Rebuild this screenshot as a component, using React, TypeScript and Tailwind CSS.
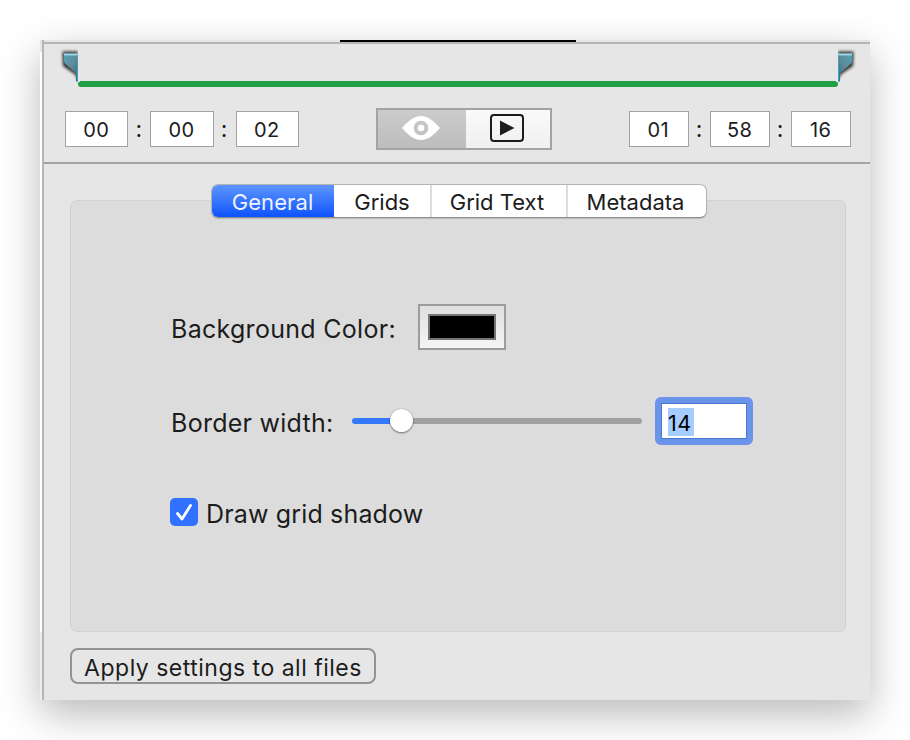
import React from 'react';

const Marker = ({ flip, id }: { flip?: boolean; id: string }) => (
  <svg width="22" height="36" viewBox="0 0 22 36" className={flip ? 'block -scale-x-100' : 'block'}>
    <defs>
      <linearGradient id={id} x1="0" y1="0" x2="1" y2="1">
        <stop offset="0" stopColor="#4aa5bd" />
        <stop offset="0.5" stopColor="#648a98" />
        <stop offset="1" stopColor="#1d6e8c" />
      </linearGradient>
      <filter id={`${id}-blur`} x="-50%" y="-50%" width="200%" height="200%">
        <feGaussianBlur stdDeviation="1.4" />
      </filter>
    </defs>
    <path d="M4.500 5.500H20V32H18V29L5 20Z" fill="#111" opacity="0.85" filter={`url(#${id}-blur)`} />
    <path d="M20 0h2v36h-2z" fill="#e6e6e6" />
    <path d="M6 7.500H20V35.500H18V28L17 26.500L8 18.500Q6 17 6 15Z" fill={`url(#${id})`} />
    <path d="M6 7.500H20V9.500H6Z" fill="#9bd2e2" />
    <path d="M19 9h1v26h-1z" fill="#46a0bb" />
  </svg>
);

const TimeGroup = ({ values, box, gap }: { values: string[]; box: string; gap: string }) => (
  <div className="flex items-center">
    {values.map((v, i) => (
      <React.Fragment key={i}>
        {i > 0 && <span className={`${gap} pr-px text-center text-[23px] leading-none`}>:</span>}
        <div className={`${box} flex h-9 items-center justify-center border border-[#a2a2a2] bg-white pr-px pt-px text-[20px] tracking-[0.4px]`}>
          {v}
        </div>
      </React.Fragment>
    ))}
  </div>
);

const Timeline = () => (
  <section className="h-[120px] border-b-2 border-[#a3a3a3]">
    <div className="flex h-[37px] justify-between pl-[14px] pr-[12px] pt-[2px]">
      <Marker id="start" />
      <Marker id="end" flip />
    </div>
    <div className="ml-[34px] h-[6px] w-[760px] rounded-full bg-[#219f46]" />
    <div className="mt-[21px] flex h-[42px] items-center justify-between pl-[21px] pr-[19px]">
      <TimeGroup values={['00', '00', '02']} box="w-[63.300px]" gap="w-[22px]" />
      <div className="mr-[1px] flex h-[42px] w-[176px] border-2 border-[#a3a3a3]">
        <div className="flex w-[88px] items-center bg-linear-to-b from-[#cccccc] to-[#bdbdbd] pl-6">
          <svg width="38" height="24" viewBox="0 0 38 24" className="mb-[2px]">
            <path fillRule="evenodd" fill="#fff" d="M0 12C6 5 12 0 19 0s13 5 19 12c-6 7-12 12-19 12S6 19 0 12ZM19 4.700a7.300 7.300 0 1 0 0 14.600a7.300 7.300 0 1 0 0-14.600ZM19 8.700a3.300 3.300 0 1 1 0 6.600a3.300 3.300 0 1 1 0-6.600Z" />
          </svg>
        </div>
        <div className="flex grow items-center bg-linear-to-b from-[#fafafa] to-[#f0f0f0] pl-6">
          <svg width="34" height="28" viewBox="0 0 34 28" className="mb-[2px]">
            <rect x="1" y="1" width="32" height="26" rx="3" fill="none" stroke="#1c1c1c" strokeWidth="2" />
            <path d="M10 6.500V21.500L24.500 14Z" fill="#1c1c1c" />
          </svg>
        </div>
      </div>
      <TimeGroup values={['01', '58', '16']} box="w-[59.500px]" gap="w-[21.700px]" />
    </div>
  </section>
);

const Tabs = () => (
  <div className="relative ml-[141px] flex h-[34px] w-[496px] overflow-hidden rounded-[7px] border border-[#b3b3b3] border-b-[#8f8f8f] bg-white text-[22px] shadow-[0_1px_1px_rgba(0,0,0,0.15)]">
    <div className="-my-px -ml-px flex w-[123px] shrink-0 items-center justify-center border-b border-[#1b49c0] bg-linear-to-b from-[#5f95fb] to-[#0b51fe] pt-[3px] tracking-[0.1px] text-[#eef3ff]">General</div>
    <div className="flex w-[98px] shrink-0 items-center justify-center border-r-2 border-[#dcdcdc] pt-[3px]">Grids</div>
    <div className="flex w-[136px] shrink-0 items-center justify-center border-r-2 border-[#dcdcdc] pr-1 pt-[3px]">Grid Text</div>
    <div className="flex grow items-center justify-center pr-[3px] pt-[3px]">Metadata</div>
  </div>
);

const General = () => (
  <div className="-mt-[18px] h-[432px] rounded-[7px] border border-[#d2d2d2] bg-[#dcdcdc] pl-[99px] pt-[103px] text-[25px]">
    <div className="flex h-[46px] items-center">
      <span className="w-[248px] whitespace-nowrap pl-px pt-[5px] tracking-[0.290px]">Background Color:</span>
      <div className="flex h-[46px] w-[88px] items-center justify-center border-2 border-[#9c9c9c] bg-linear-to-b from-[#dfdfdf] to-[#f5f5f5]">
        <div className="h-[26px] w-[68px] border-2 border-[#757575] bg-black" />
      </div>
    </div>
    <div className="mt-[47px] flex h-12 items-center">
      <span className="w-[182px] whitespace-nowrap pl-px pt-[5px] tracking-[0.270px]">Border width:</span>
      <div className="flex h-6 w-[290px] items-center">
        <div className="h-[6px] w-[37.500px] rounded-l-full bg-[#3478fd]" />
        <div className="z-10 mb-px size-[23px] shrink-0 rounded-full bg-white shadow-[0_1px_2px_rgba(0,0,0,0.45),0_0_1px_rgba(0,0,0,0.4)]" />
        <div className="h-[6px] grow rounded-r-full bg-[#a0a0a0]" />
      </div>
      <div className="ml-[13px] h-12 w-[98px] rounded-[6px] bg-[#6a94e8] p-[6px]">
        <div className="flex h-9 items-center border border-[#4879d3] bg-white pl-[6px] pt-px">
          <span className="flex h-7 w-[26px] items-center bg-[#a6cdff] pt-[3px] text-[21.500px] tracking-[0.500px] text-black">14</span>
        </div>
      </div>
    </div>
    <div className="mt-[53px] flex h-7 items-center">
      <div className="size-7 rounded-[5px] bg-[#3071ff]">
        <svg width="28" height="28" viewBox="0 0 28 28">
          <path d="M7.500 15.500L12 21L20.500 7.500" fill="none" stroke="#fff" strokeWidth="2.800" strokeLinecap="round" strokeLinejoin="round" />
        </svg>
      </div>
      <span className="ml-2 whitespace-nowrap pt-[5px] tracking-[0.160px]">Draw grid shadow</span>
    </div>
  </div>
);

export default function App() {
  return (
    <div className="h-[740px] w-[910px] overflow-hidden bg-white p-10 font-['Inter',sans-serif] text-[#1c1c1c]">
      <div className="flex h-[660px] w-[830px] rounded-b-[4px] bg-[#e6e6e6] shadow-[0_14px_40px_rgba(0,0,0,0.28)]">
        <div className="flex w-[2px] shrink-0 flex-col">
          <div className="mt-[12px] h-[580px] bg-white" />
          <div className="grow bg-[#eeeeee]" />
        </div>
        <div className="w-[2px] shrink-0 bg-[#b5b5b5]" />
        <main className="grow">
          <div className="h-[4px] border-b-2 border-[#b5b5b5]">
            <div className="ml-[296px] h-[2px] w-[236px] bg-black" />
          </div>
          <Timeline />
          <section className="pl-[26px] pr-[24px] pt-5">
            <Tabs />
            <General />
            <button className="mt-4 flex h-9 w-[306px] items-center justify-center whitespace-nowrap rounded-[8px] border-2 border-[#939393] pt-[4px] text-[23px] tracking-[0.500px]">
              Apply settings to all files
            </button>
          </section>
        </main>
      </div>
    </div>
  );
}
